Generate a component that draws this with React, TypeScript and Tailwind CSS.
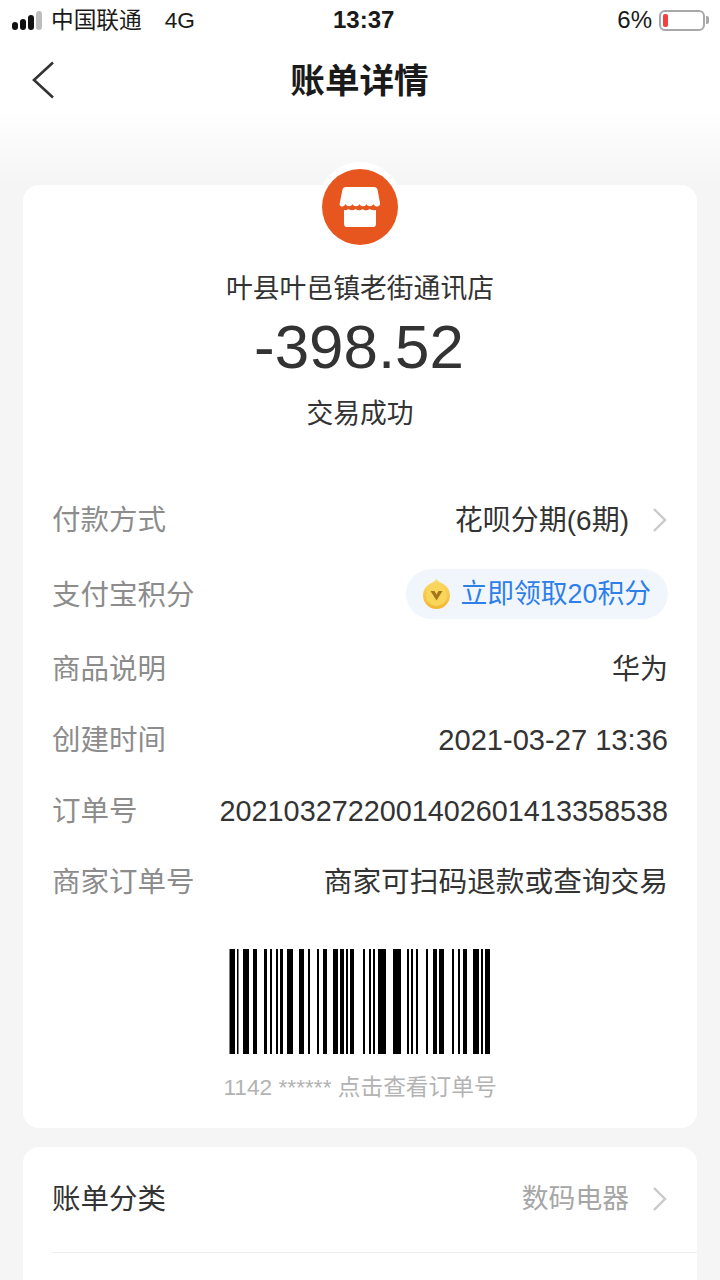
const FONT = "font-['Liberation_Sans','Noto_Sans_CJK_SC',sans-serif]";

// [start, end] of each bar, in px from the barcode's left edge (x=229)
const BARS: [number, number][] = [
  [0.5, 6], [8, 9.5], [14, 20], [24, 28], [35, 38], [41, 43], [47, 49], [51, 54], [58, 64],
  [70, 75], [79, 81], [88, 90], [94, 98], [104, 109], [111, 115], [117, 119], [121, 125],
  [134, 136], [140, 142], [144, 146], [149, 157], [164, 172], [178, 180], [182, 184], [187, 189],
  [197, 199], [204, 208], [210, 215], [223, 225], [229, 231], [234, 238], [244, 250], [252, 254], [256, 261],
];

function Chevron({ className }: { className?: string }) {
  return (
    <svg className={className} width="16" height="26" viewBox="0 0 16 26" fill="none">
      <path d="M2 2l11 11L2 24" stroke="#c9c9c9" strokeWidth="2.4" />
    </svg>
  );
}

function Row({ label, children, className }: { label: string; children: React.ReactNode; className?: string }) {
  return (
    <div className={`h-[71px] flex items-center justify-between ${className ?? ''}`}>
      <span className="text-[28.5px] text-[#8c8c8c] whitespace-nowrap">{label}</span>
      <div className="flex items-center text-[#333333] whitespace-nowrap">{children}</div>
    </div>
  );
}

export default function App() {
  return (
    <div className={`${FONT} h-[1280px] w-[720px] overflow-hidden bg-[#f5f5f5]`}>
      <div className="h-[185px] -mb-[185px] bg-gradient-to-b from-white from-[58%] to-[#f5f5f5]" />

      {/* Status bar */}
      <div className="relative h-[40px] flex items-center justify-between pl-[12px] pr-[11px] text-[#1a1a1a]">
        <div className="flex items-center">
          <div className="flex items-end gap-[2px] h-[20px]">
            <span className="w-[6px] h-[8px] rounded-full bg-[#111]" />
            <span className="w-[6px] h-[11px] rounded-[3px] bg-[#111]" />
            <span className="w-[6px] h-[15px] rounded-[3px] bg-[#111]" />
            <span className="w-[6px] h-[19px] rounded-[3px] bg-[#bdbdbd]" />
          </div>
          <span className="ml-[9px] text-[22.7px]">中国联通</span>
          <span className="ml-[23px] text-[22.7px]">4G</span>
        </div>
        <span className="absolute left-[333px] text-[24px] font-bold">13:37</span>
        <div className="flex items-center">
          <span className="text-[24px]">6%</span>
          <div className="ml-[7px] w-[46px] h-[21px] rounded-[6px] border-2 border-[#a8a8a8] p-[2px]">
            <div className="w-[5px] h-full rounded-[2px] bg-[#f64040]" />
          </div>
          <div className="ml-[1px] w-[3px] h-[8px] rounded-r-[2px] bg-[#a8a8a8]" />
        </div>
      </div>

      {/* Nav bar */}
      <div className="relative h-[81px] flex items-center justify-center">
        <svg className="absolute left-[31px] top-[21px]" width="24" height="38" viewBox="0 0 24 38" fill="none">
          <path d="M22 1.5L3 19l19 17.5" stroke="#333" strokeWidth="2.6" />
        </svg>
        <h1 className="mt-[2px] -ml-[1px] text-[34.6px] font-bold text-[#1a1a1a]">账单详情</h1>
      </div>

      {/* Main card */}
      <div className="relative mt-[64px] mx-[23px] h-[943px] rounded-[16px] bg-white px-[29px]">
        <div className="absolute left-[295px] -top-[23px] w-[84px] h-[84px] rounded-full bg-white" />
        <div className="absolute left-[299px] -top-[16px] w-[76px] h-[76px] rounded-full bg-[#e8561f] flex items-center justify-center">
          <svg width="42" height="42" viewBox="0 0 42 42">
            <path d="M7 1h28c2 0 3 1 3.500 2.500L41 17c.5 2-1.500 4-3.500 3.500-1.500-.3-2.500-1.300-3-2.500-.8 2.800-6 3-7 0-1 3-6 3-7 0-1 3-6 3-7 0-.8 2.800-5.500 3-7 0-.5 1.200-1.500 2.200-3 2.500C1.500 21 0 19 .8 17L3.500 3.500C4 2 5 1 7 1z" fill="#fff" />
            <path d="M5 24c2 .4 3.500-.2 4.500-1 2.300 1.800 5 1.500 7 0 2.400 1.700 5 1.700 7 0 2 1.500 5 1.800 7 0 1 .8 3.500 1.400 6.500 1v14c0 2-1 3-3 3H8c-2 0-3-1-3-3V24z" fill="#fff" />
          </svg>
        </div>

        <div className="pt-[86px] flex flex-col items-center text-[#333333]">
          <div className="h-[36px] leading-[36px] text-[26.8px] whitespace-nowrap">叶县叶邑镇老街通讯店</div>
          <div className="mt-[5px] pr-[2px] h-[70px] leading-[70px] text-[61.9px] whitespace-nowrap">-398.52</div>
          <div className="mt-[14px] h-[36px] leading-[36px] text-[26.8px]">交易成功</div>
        </div>

        <div className="mt-[53px]">
          <Row label="付款方式" className="mb-[4px]">
            <span className="text-[28px]">花呗分期(6期)</span>
            <Chevron className="ml-[23px] mb-[2px]" />
          </Row>
          <Row label="支付宝积分" className="mb-[3px]">
            <div className="mb-[3px] h-[50px] pl-[16px] pr-[17px] rounded-full bg-[#f1f6fd] flex items-center text-[#2f7fe8] text-[26.8px]">
              <svg width="29" height="32" viewBox="0 0 29 32" className="mr-[9px]">
                <defs>
                  <linearGradient id="coin" x1="0" y1="0" x2="0" y2="1">
                    <stop offset="0" stopColor="#fbdc6a" />
                    <stop offset="1" stopColor="#f2b733" />
                  </linearGradient>
                </defs>
                <path d="M14.500 1c1.200 2 2.800 3 4.500 3.700C24 6.500 28 11.500 28 17.500 28 25 22 31 14.500 31S1 25 1 17.500C1 11.500 5 6.500 10 4.700 11.700 4 13.300 3 14.500 1z" fill="url(#coin)" />
                <circle cx="14.500" cy="17.500" r="10.500" fill="#f9d55a" />
                <path d="M8.500 13h4l2 3.500 2-3.500h4l-6 9.500z" fill="#a5761c" />
              </svg>
              <span>立即领取20积分</span>
            </div>
          </Row>
          <Row label="商品说明"><span className="text-[28px]">华为</span></Row>
          <Row label="创建时间"><span className="text-[29.1px]">2021-03-27 13:36</span></Row>
          <Row label="订单号"><span className="text-[28.8px]">2021032722001402601413358538</span></Row>
          <Row label="商家订单号"><span className="text-[28.7px]">商家可扫码退款或查询交易</span></Row>
        </div>

        <div className="mt-[31px] flex flex-col items-center">
          <svg width="262" height="105" viewBox="0 0 262 105" className="block">
            {BARS.map(([a, b]) => (
              <rect key={a} x={a} y={0} width={b - a} height={105} fill="#000" />
            ))}
          </svg>
          <div className="mt-[18px] text-[22.7px] leading-[30px] text-[#b3b3b3] whitespace-nowrap">1142 ****** 点击查看订单号</div>
        </div>
      </div>

      {/* Category card */}
      <div className="mt-[19px] ml-[23px] mr-[23px] h-[200px] rounded-[16px] bg-white pl-[29px]">
        <div className="h-[106px] flex items-center justify-between border-b border-[#eeeeee] pr-[29px]">
          <span className="text-[28.5px] text-[#333333]">账单分类</span>
          <div className="flex items-center">
            <span className="text-[26.8px] text-[#a6a6a6]">数码电器</span>
            <Chevron className="ml-[23px] mb-[2px]" />
          </div>
        </div>
      </div>
    </div>
  );
}
